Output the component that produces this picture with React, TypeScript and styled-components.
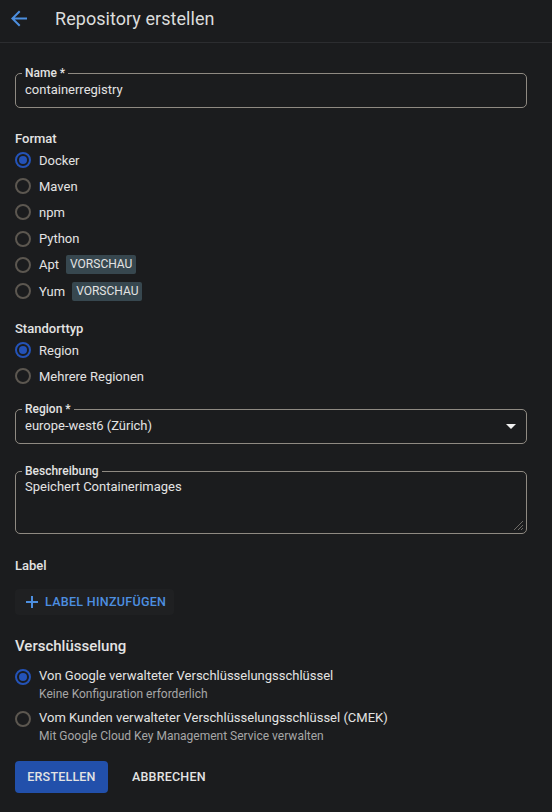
import React from "react";
import styled, { createGlobalStyle } from "styled-components";

const Global = createGlobalStyle`
  html, body { margin: 0; padding: 0; background: #1b1c1e; }
  body { font-family: Roboto, "Liberation Sans", Arial, sans-serif; color: #e3e3e3; }
  * { box-sizing: border-box; }
`;

const Page = styled.div`
  width: 552px;
  min-height: 812px;
  background: #1b1c1e;
`;

const Header = styled.header`
  height: 43px;
  display: flex;
  align-items: center;
  border-bottom: 1px solid #2c2d30;
  padding-left: 7px;
  padding-bottom: 6px;
`;

const BackBtn = styled.div`
  width: 24px;
  height: 24px;
  display: flex;
  align-items: center;
  justify-content: center;
  margin-right: 24px;
`;

const Title = styled.h1`
  margin: 0;
  font-size: 18px;
  font-weight: 400;
  color: #dcdcdc;
  letter-spacing: 0.05px;
`;

const Form = styled.div`
  padding: 30px 25px 0 15px;
  display: flex;
  flex-direction: column;
`;

const Field = styled.div<{ $h: number; $mb: number }>`
  position: relative;
  height: ${(p) => p.$h}px;
  border: 1px solid #8f8a82;
  border-radius: 5px;
  margin-bottom: ${(p) => p.$mb}px;
  padding: 8px 9px 0;
`;

const FieldLabel = styled.span`
  position: absolute;
  top: -8px;
  left: 6px;
  padding: 0 3px;
  background: #1b1c1e;
  font-size: 12px;
  font-weight: 500;
  color: #e3e3e3;
  line-height: 14px;
`;

const FieldValue = styled.div<{ $mt?: number }>`
  font-size: 13px;
  color: #e3e3e3;
  line-height: 16px;
  margin-top: ${(p) => p.$mt ?? 0}px;
`;

const SelectArrow = styled.div`
  position: absolute;
  right: 10px;
  top: 14px;
  width: 0;
  height: 0;
  border-left: 5px solid transparent;
  border-right: 5px solid transparent;
  border-top: 5px solid #f0f0f0;
`;

const Resize = styled.svg`
  position: absolute;
  right: 2px;
  bottom: 2px;
`;

const SectionTitle = styled.div<{ $mb?: number }>`
  font-size: 13px;
  font-weight: 500;
  color: #e3e3e3;
  line-height: 16px;
  margin-bottom: ${(p) => p.$mb ?? 6}px;
`;

const RadioGroup = styled.div<{ $mb: number }>`
  display: flex;
  flex-direction: column;
  margin-bottom: ${(p) => p.$mb}px;
`;

const RadioRow = styled.div<{ $h?: number }>`
  height: ${(p) => p.$h ?? 26.2}px;
  display: flex;
  align-items: center;
`;

const Circle = styled.span<{ $on?: boolean }>`
  width: 16px;
  height: 16px;
  border-radius: 50%;
  border: 2px solid ${(p) => (p.$on ? "#2453b8" : "#5c5750")};
  margin-right: 8px;
  flex: none;
  display: flex;
  align-items: center;
  justify-content: center;
  &::after {
    content: "";
    display: ${(p) => (p.$on ? "block" : "none")};
    width: 8px;
    height: 8px;
    border-radius: 50%;
    background: #2453b8;
  }
`;

const RadioText = styled.span`
  font-size: 13px;
  color: #e3e3e3;
`;

const Badge = styled.span`
  margin-left: 7px;
  background: #37474f;
  color: #e3e3e3;
  font-size: 12px;
  padding: 2px 4px;
  border-radius: 2px;
  line-height: 15px;
`;

const LabelButton = styled.div`
  align-self: flex-start;
  margin-top: 15px;
  height: 26px;
  padding: 0 8px 0 10px;
  display: flex;
  align-items: center;
  gap: 6px;
  background: #1f2022;
  border-radius: 4px;
  color: #4d8fe0;
  font-size: 12.5px;
  font-weight: 500;
  letter-spacing: 0.3px;
  margin-bottom: 22px;
`;

const BigTitle = styled.div`
  font-size: 15px;
  font-weight: 500;
  color: #e3e3e3;
  margin-bottom: 12px;
`;

const EncRow = styled.div`
  display: flex;
  align-items: flex-start;
  height: 42px;
`;

const EncCircle = styled(Circle)`
  margin-top: 2px;
`;

const EncText = styled.div`
  display: flex;
  flex-direction: column;
`;

const EncMain = styled.span`
  font-size: 13px;
  color: #e3e3e3;
  line-height: 17px;
`;

const EncSub = styled.span`
  font-size: 12px;
  color: #a7a7a7;
  line-height: 17px;
  margin-top: 2px;
`;

const Actions = styled.div`
  display: flex;
  align-items: center;
  margin-top: 10px;
  gap: 24px;
`;

const Primary = styled.button`
  height: 32px;
  width: 93px;
  border: none;
  border-radius: 4px;
  background: #2250ab;
  color: #e3e3e3;
  font-family: inherit;
  font-size: 12.5px;
  font-weight: 500;
  letter-spacing: 0.2px;
`;

const Secondary = styled.button`
  background: none;
  border: none;
  color: #e3e3e3;
  font-family: inherit;
  font-size: 12.5px;
  font-weight: 500;
  letter-spacing: 0.2px;
  padding: 0;
`;

const formats: { name: string; on?: boolean; badge?: boolean }[] = [
  { name: "Docker", on: true },
  { name: "Maven" },
  { name: "npm" },
  { name: "Python" },
  { name: "Apt", badge: true },
  { name: "Yum", badge: true },
];

export default function App() {
  return (
    <Page>
      <Global />
      <Header>
        <BackBtn>
          <svg width="25" height="25" viewBox="0 0 24 24">
            <path d="M20 11H7.83l5.59-5.59L12 4l-8 8 8 8 1.41-1.41L7.83 13H20v-2z" fill="#4d8fe0" />
          </svg>
        </BackBtn>
        <Title>Repository erstellen</Title>
      </Header>
      <Form>
        <Field $h={35} $mb={23}>
          <FieldLabel>Name *</FieldLabel>
          <FieldValue>containerregistry</FieldValue>
        </Field>
        <SectionTitle $mb={0}>Format</SectionTitle>
        <RadioGroup $mb={17}>
          {formats.map((f) => (
            <RadioRow key={f.name}>
              <Circle $on={f.on} />
              <RadioText>{f.name}</RadioText>
              {f.badge && <Badge>VORSCHAU</Badge>}
            </RadioRow>
          ))}
        </RadioGroup>
        <SectionTitle $mb={0}>Standorttyp</SectionTitle>
        <RadioGroup $mb={19}>
          <RadioRow>
            <Circle $on />
            <RadioText>Region</RadioText>
          </RadioRow>
          <RadioRow>
            <Circle />
            <RadioText>Mehrere Regionen</RadioText>
          </RadioRow>
        </RadioGroup>
        <Field $h={35} $mb={27}>
          <FieldLabel>Region *</FieldLabel>
          <FieldValue>europe-west6 (Zürich)</FieldValue>
          <SelectArrow />
        </Field>
        <Field $h={63} $mb={24}>
          <FieldLabel>Beschreibung</FieldLabel>
          <FieldValue $mt={-1}>Speichert Containerimages</FieldValue>
          <Resize width="12" height="12" viewBox="0 0 12 12">
            <path d="M11 2L2 11M11 6L6 11M11 9L9 11" stroke="#6d6a66" strokeWidth="1" />
          </Resize>
        </Field>
        <SectionTitle $mb={0}>Label</SectionTitle>
        <LabelButton>
          <svg width="14" height="14" viewBox="0 0 14 14">
            <path d="M7 1v12M1 7h12" stroke="#4d8fe0" strokeWidth="2" />
          </svg>
          LABEL HINZUFÜGEN
        </LabelButton>
        <BigTitle>Verschlüsselung</BigTitle>
        <EncRow>
          <EncCircle $on />
          <EncText>
            <EncMain>Von Google verwalteter Verschlüsselungsschlüssel</EncMain>
            <EncSub>Keine Konfiguration erforderlich</EncSub>
          </EncText>
        </EncRow>
        <EncRow>
          <EncCircle />
          <EncText>
            <EncMain>Vom Kunden verwalteter Verschlüsselungsschlüssel (CMEK)</EncMain>
            <EncSub>Mit Google Cloud Key Management Service verwalten</EncSub>
          </EncText>
        </EncRow>
        <Actions>
          <Primary>ERSTELLEN</Primary>
          <Secondary>ABBRECHEN</Secondary>
        </Actions>
      </Form>
    </Page>
  );
}
